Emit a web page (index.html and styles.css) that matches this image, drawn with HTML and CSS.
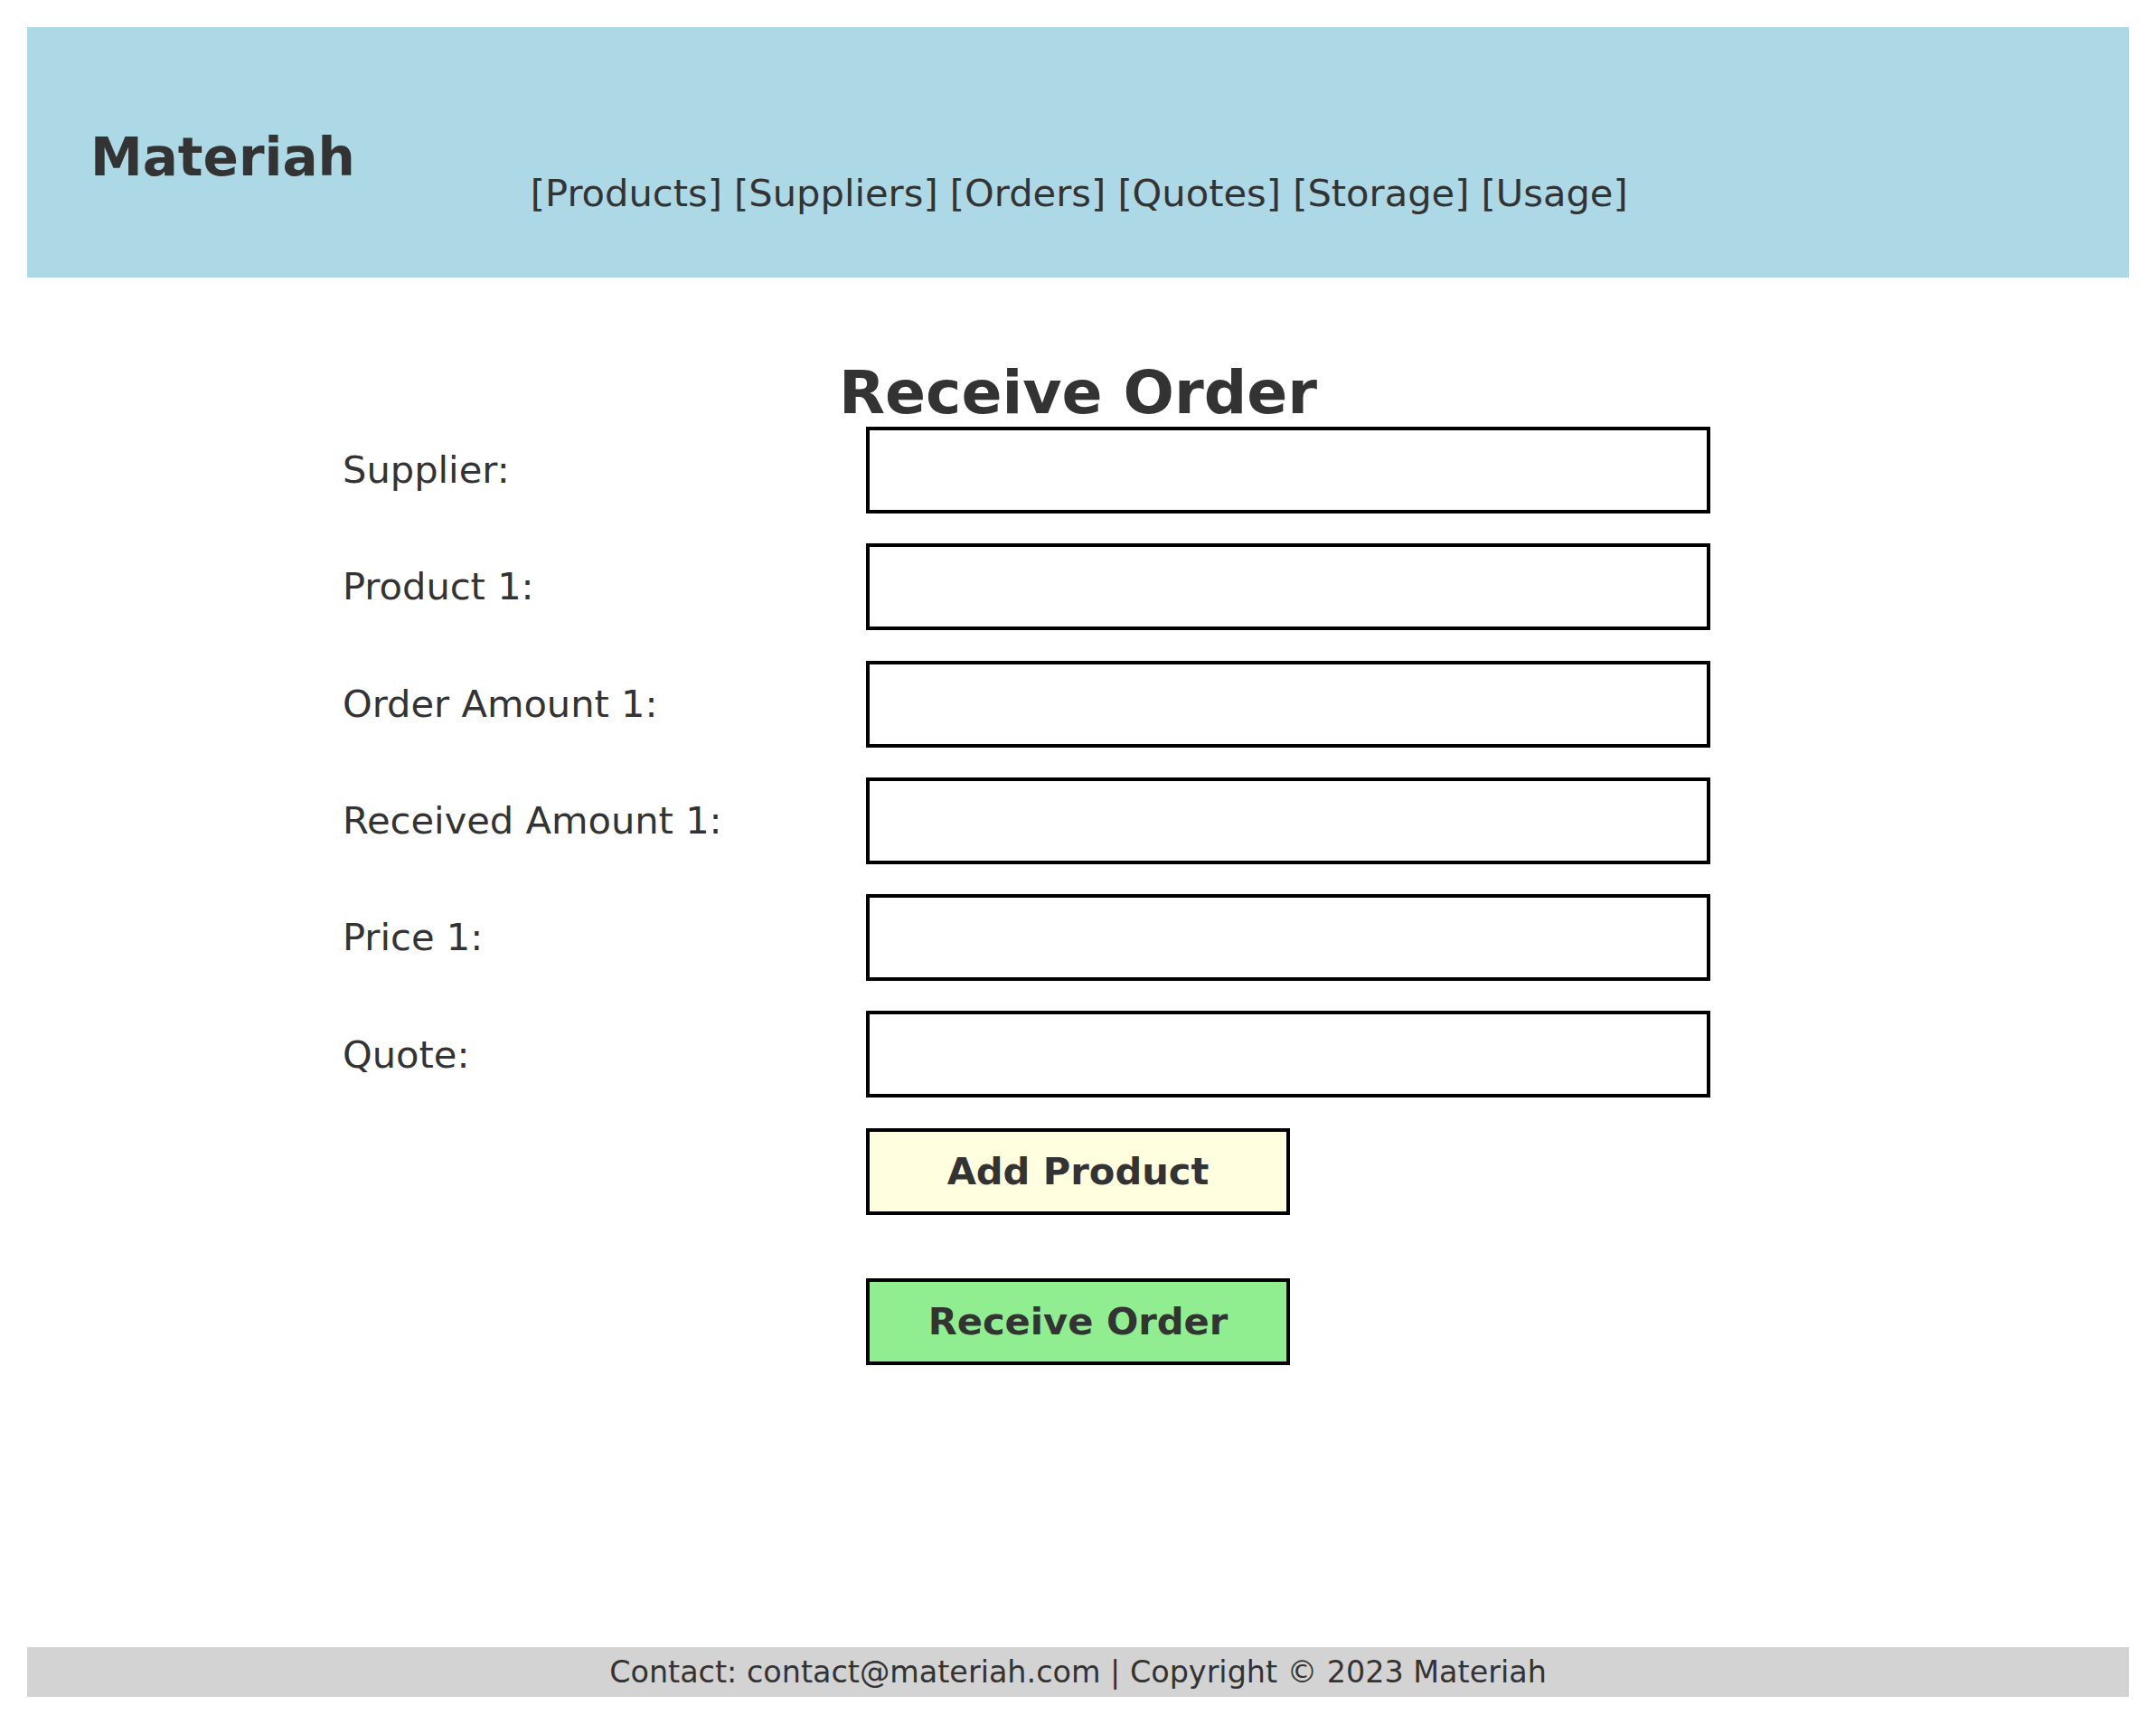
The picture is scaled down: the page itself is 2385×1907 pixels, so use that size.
FILE: index.html
```html
<!DOCTYPE html>
<html lang="en">
<head>
<meta charset="utf-8">
<title>Materiah - Receive Order</title>
<link rel="stylesheet" href="styles.css">
</head>
<body>
<header class="site-header">
  <h1 class="brand">Materiah</h1>
  <nav class="main-nav">[Products] [Suppliers] [Orders] [Quotes] [Storage] [Usage]</nav>
</header>
<main class="content">
  <h2 class="page-title">Receive Order</h2>
  <form class="order-form">
    <div class="form-grid">
      <label class="field-label" for="supplier">Supplier:</label>
      <input class="field-input" id="supplier" type="text">
      <label class="field-label" for="product1">Product 1:</label>
      <input class="field-input" id="product1" type="text">
      <label class="field-label" for="amount1">Order Amount 1:</label>
      <input class="field-input" id="amount1" type="text">
      <label class="field-label" for="received1">Received Amount 1:</label>
      <input class="field-input" id="received1" type="text">
      <label class="field-label" for="price1">Price 1:</label>
      <input class="field-input" id="price1" type="text">
      <label class="field-label" for="quote">Quote:</label>
      <input class="field-input" id="quote" type="text">
      <span class="spacer"></span>
      <button class="btn btn-add" type="button">Add Product</button>
    </div>
    <div class="submit-row">
      <button class="btn btn-submit" type="submit">Receive Order</button>
    </div>
  </form>
</main>
<footer class="site-footer">Contact: contact@materiah.com | Copyright © 2023 Materiah</footer>
</body>
</html>
```
FILE: styles.css
```css
* { box-sizing: border-box; }

html, body { height: 100%; }

body {
  margin: 30px;
  min-height: calc(100vh - 60px);
  height: auto;
  display: flex;
  flex-direction: column;
  font-family: "DejaVu Sans", "Liberation Sans", sans-serif;
  color: #333333;
  background: #ffffff;
}

.site-header {
  background: #add8e6;
  height: 277px;
  padding: 110px 70px 0 70px;
  display: flex;
  align-items: flex-start;
}

.brand {
  margin: 0;
  font-size: 58px;
  line-height: 1.2;
  font-weight: bold;
}

.main-nav {
  margin-left: 194px;
  margin-top: 49px;
  font-size: 41.6px;
  line-height: 1.2;
}

.content {
  display: flex;
  flex-direction: column;
  align-items: center;
}

.page-title {
  margin: 89px 0 0 0;
  font-size: 66.4px;
  line-height: 76px;
  font-weight: bold;
  text-align: center;
}

.order-form {
  width: 1627px;
  display: flex;
  flex-direction: column;
}

.form-grid {
  display: grid;
  grid-template-columns: 579px 934px;
  grid-auto-rows: 96px;
  row-gap: 33.3px;
  align-items: center;
}

.field-label {
  font-size: 41.6px;
  line-height: 1.2;
}

.field-input {
  height: 96px;
  width: 934px;
  border: 4px solid #000000;
  background: #ffffff;
  border-radius: 0;
  margin: 0;
  padding: 0 12px;
  font: inherit;
  font-size: 41.6px;
}

.btn {
  width: 469px;
  height: 96px;
  border: 4px solid #000000;
  border-radius: 0;
  margin: 0;
  padding: 0;
  font-family: "DejaVu Sans", "Liberation Sans", sans-serif;
  font-size: 41.6px;
  font-weight: bold;
  color: #333333;
  text-align: center;
}

.btn-add { background: #ffffe0; }

.submit-row {
  margin-top: 70px;
  padding-left: 579px;
}

.btn-submit { background: #90ee90; }

.site-footer {
  margin-top: auto;
  background: #d3d3d3;
  height: 55px;
  line-height: 55px;
  font-size: 33.4px;
  text-align: center;
}
```
